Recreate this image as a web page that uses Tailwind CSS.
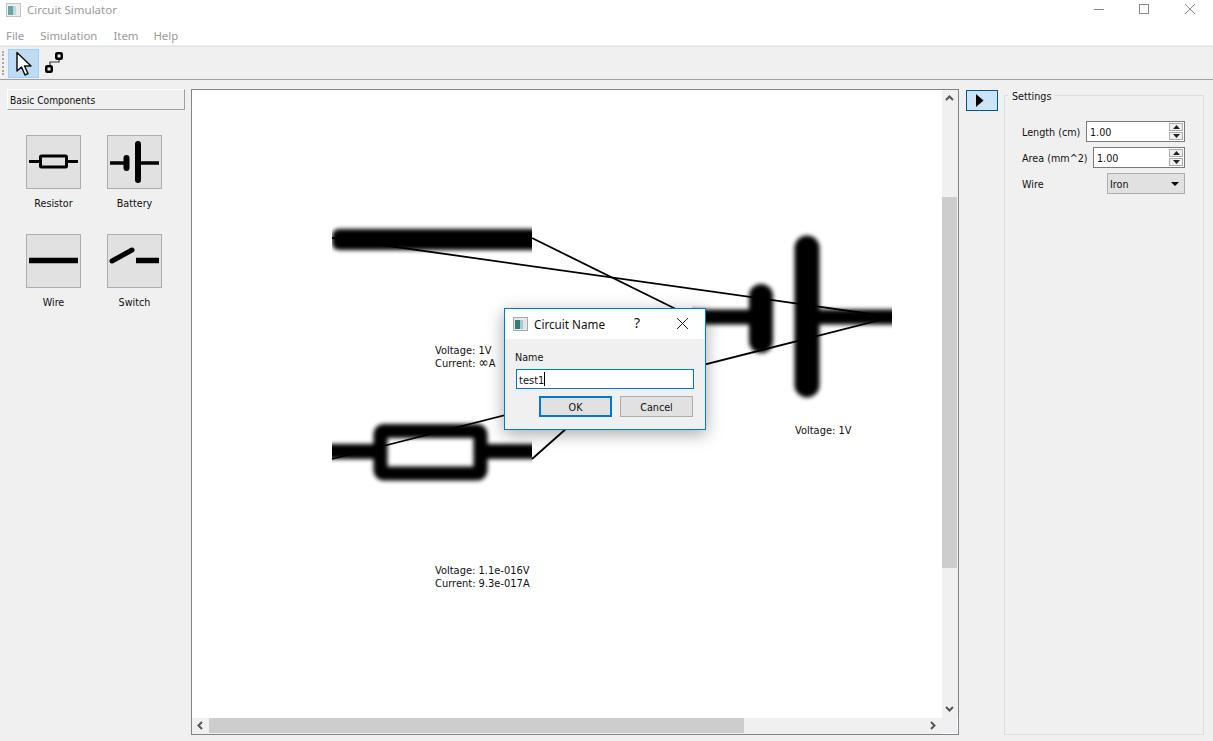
<!DOCTYPE html>
<html lang="en">
<head>
    <meta charset="UTF-8">
    <title>Circuit Simulator</title>
    <script src="https://cdn.jsdelivr.net/npm/@tailwindcss/browser@4"></script>
</head>
<body class="w-[1213px] h-[741px] overflow-hidden bg-[#f0f0f0] text-[10.700px] leading-[13px] text-[#111] font-['DejaVu_Sans_Condensed','Noto_Sans',sans-serif]">
    <!-- Title bar -->
    <div class="h-[25px] bg-white flex items-start relative">
        <svg class="ml-[6px] mt-[3px] opacity-70" width="15" height="14" viewBox="0 0 15 14">
            <rect x="0.5" y="0.5" width="14" height="13" fill="#e8e8e8" stroke="#a9a9a9"/>
            <rect x="2" y="3" width="5" height="9" fill="#2e7d78"/>
            <rect x="7" y="3" width="3" height="9" fill="#a5c9d6"/>
            <rect x="10" y="3" width="3" height="9" fill="#dfe6e6"/>
        </svg>
        <span class="ml-[6px] mt-[2px] text-[11.500px] leading-[16px] text-[#999] font-['Noto_Sans',sans-serif]">Circuit Simulator</span>
        <svg class="absolute left-[1094px] top-[4px]" width="102" height="11" viewBox="0 0 102 11" fill="none" stroke="#8a8a8a">
            <path d="M0 5.5H10"/>
            <rect x="45.5" y="0.5" width="9" height="9"/>
            <path d="M91 0L101 10M101 0L91 10"/>
        </svg>
    </div>
    <!-- Menu -->
    <div class="h-[21px] bg-white flex items-center gap-[16px] pl-[6px] pt-[1px] text-[11.400px] text-[#999] border-b border-[#f0f0f0] font-['Noto_Sans',sans-serif]">
        <span>File</span><span>Simulation</span><span class="w-[24px]">Item</span><span>Help</span>
    </div>
    <!-- Toolbar -->
    <div class="h-[34px] flex items-center border-b border-[#a0a0a0] border-t border-t-[#e3e3e3] relative">
        <div class="ml-[2px] w-[2px] h-[24px] border-l-2 border-dotted border-[#a8a8a8]"></div>
        <div class="ml-[4px] w-[31px] h-[29px] bg-[#bfdcf4] border border-[#99d1ff] flex items-center justify-center">
            <svg width="17" height="25" viewBox="0 0 17 25">
                <path d="M2 1.5V20L6.5 16L10 24L13 22.500L9.500 15H16Z" fill="#fff" stroke="#111" stroke-width="1.500" stroke-linejoin="round"/>
            </svg>
        </div>
        <svg class="ml-[6px]" width="20" height="24" viewBox="0 0 20 24" fill="none" stroke="#000">
            <rect x="1.250" y="15.250" width="5.500" height="5.500" stroke-width="2.500" rx="1"/>
            <rect x="11.250" y="2.250" width="5.500" height="5.500" stroke-width="2.500" rx="1"/>
            <path d="M5 14V11H14V9" stroke-width="1.200" stroke="#333"/>
        </svg>
    </div>
    <!-- Main -->
    <div class="flex h-[655px] items-start">
        <!-- Component palette -->
        <div class="w-[191px] pl-[7px] pt-[9px] shrink-0">
            <div class="w-[178px] h-[21px] pl-[2px] pt-[2px] text-[10.200px] flex items-center bg-[#f0f0f0] border-t border-l border-t-white border-l-white border-r border-b border-r-[#a0a0a0] border-b-[#a0a0a0]">Basic Components</div>
            <div class="grid grid-cols-[55px_55px] gap-x-[26px] gap-y-[24px] ml-[19px] mt-[25px]">
                <div class="flex flex-col items-center gap-[8px]">
                    <div class="w-[55px] h-[54px] bg-[#e1e1e1] border border-[#adadad]">
                        <svg class="blur-[0.4px]" width="53" height="52" viewBox="0 0 53 52" fill="none" stroke="#000">
                            <path d="M2 25.500H13M40 25.500H51" stroke-width="3"/>
                            <rect x="13.500" y="20" width="26" height="11" rx="1" stroke-width="3"/>
                        </svg>
                    </div>
                    <span>Resistor</span>
                </div>
                <div class="flex flex-col items-center gap-[8px]">
                    <div class="w-[55px] h-[54px] bg-[#e1e1e1] border border-[#adadad]">
                        <svg class="blur-[0.4px]" width="53" height="52" viewBox="0 0 53 52" fill="none" stroke="#000" stroke-linecap="round">
                            <path d="M2 27H18" stroke-width="3.500" stroke-linecap="butt"/>
                            <path d="M18.500 22V32" stroke-width="6"/>
                            <path d="M30 8V44" stroke-width="6"/>
                            <path d="M30 27H51" stroke-width="3.500" stroke-linecap="butt"/>
                        </svg>
                    </div>
                    <span>Battery</span>
                </div>
                <div class="flex flex-col items-center gap-[8px]">
                    <div class="w-[55px] h-[54px] bg-[#e1e1e1] border border-[#adadad]">
                        <svg class="blur-[0.4px]" width="53" height="52" viewBox="0 0 53 52" fill="none" stroke="#000">
                            <path d="M2 25.500H51" stroke-width="5.500" stroke-linecap="butt"/>
                        </svg>
                    </div>
                    <span>Wire</span>
                </div>
                <div class="flex flex-col items-center gap-[8px]">
                    <div class="w-[55px] h-[54px] bg-[#e1e1e1] border border-[#adadad]">
                        <svg class="blur-[0.4px]" width="53" height="52" viewBox="0 0 53 52" fill="none" stroke="#000">
                            <path d="M4 26L24 15" stroke-width="5" stroke-linecap="round"/>
                            <path d="M28 25.500H51" stroke-width="5.500"/>
                        </svg>
                    </div>
                    <span>Switch</span>
                </div>
            </div>
        </div>
        <!-- Canvas with scrollbars -->
        <div class="relative w-[768px] h-[646px] mt-[9px] shrink-0 bg-white border border-[#82828c] overflow-hidden">
            <svg class="absolute left-0 top-0" width="750" height="628" viewBox="192 90 750 628">
                <defs>
                    <filter id="soft" filterUnits="userSpaceOnUse" x="192" y="90" width="750" height="628">
                        <feGaussianBlur stdDeviation="2.200"/>
                    </filter>
                    <clipPath id="c1"><rect x="332" y="200" width="200" height="80"/></clipPath>
                    <clipPath id="c2"><rect x="332" y="400" width="200" height="100"/></clipPath>
                    <clipPath id="c3"><rect x="692" y="220" width="200" height="200"/></clipPath>
                </defs>
                <g clip-path="url(#c1)">
                    <rect x="332" y="229" width="230" height="21" rx="7" fill="#000" filter="url(#soft)"/>
                </g>
                <g clip-path="url(#c2)">
                    <g fill="none" stroke="#000" filter="url(#soft)">
                        <path d="M300 451.500H380M481 451.500H560" stroke-width="15"/>
                        <rect x="380.500" y="431" width="100" height="42.500" rx="3" stroke-width="14"/>
                    </g>
                </g>
                <g clip-path="url(#c3)">
                    <g fill="none" stroke="#000" stroke-linecap="round" filter="url(#soft)">
                        <path d="M660 317H760M807 317H920" stroke-width="15" stroke-linecap="butt"/>
                        <path d="M761 296V341" stroke-width="24"/>
                        <path d="M807 248V385" stroke-width="25"/>
                    </g>
                </g>
                <g stroke="#000" stroke-width="1.800" fill="none">
                    <path d="M332 238L892 317"/>
                    <path d="M532 238L692 317"/>
                    <path d="M332 459L892 317"/>
                    <path d="M532 459L692 317"/>
                </g>
            </svg>
            <div class="absolute left-[243px] top-[254px] text-[11px]">Voltage: 1V<br>Current: <span class="text-[13.500px] leading-[0]">∞</span>A</div>
            <div class="absolute left-[603px] top-[334px] text-[11px]">Voltage: 1V</div>
            <div class="absolute left-[243px] top-[474px] text-[11px]">Voltage: 1.1e-016V<br>Current: 9.3e-017A</div>
            <!-- Vertical scrollbar -->
            <div class="absolute right-0 top-0 w-[16px] h-[628px] bg-[#f0f0f0] pr-[1px] flex flex-col items-center">
                <svg class="mt-[5px]" width="9" height="6" viewBox="0 0 9 6" fill="none" stroke="#555" stroke-width="2"><path d="M1 5L4.500 1.500L8 5"/></svg>
                <div class="w-[15px] h-[371px] mt-[96px] bg-[#cdcdcd]"></div>
                <svg class="mt-[138px]" width="9" height="6" viewBox="0 0 9 6" fill="none" stroke="#555" stroke-width="2"><path d="M1 1L4.500 4.500L8 1"/></svg>
            </div>
            <!-- Horizontal scrollbar -->
            <div class="absolute left-0 bottom-[1px] w-[750px] h-[15px] bg-[#f0f0f0] flex items-center">
                <svg class="ml-[5px]" width="6" height="9" viewBox="0 0 6 9" fill="none" stroke="#555" stroke-width="2"><path d="M5 1L1.500 4.500L5 8"/></svg>
                <div class="w-[535px] h-[15px] ml-[6px] bg-[#cdcdcd]"></div>
                <svg class="ml-[186px]" width="6" height="9" viewBox="0 0 6 9" fill="none" stroke="#555" stroke-width="2"><path d="M1 1L4.500 4.500L1 8"/></svg>
            </div>
            <div class="absolute right-0 bottom-0 w-[16px] h-[16px] bg-[#f0f0f0] border-b border-r border-white"></div>
            <div class="absolute left-0 bottom-0 w-[750px] h-px bg-[#f0f0f0]"></div>
        </div>
        <!-- Run button -->
        <div class="ml-[7px] mt-[10px] w-[32px] h-[21px] shrink-0 bg-[#cce4f7] border border-[#005499] flex items-center pl-[9px]">
            <svg width="8" height="13" viewBox="0 0 8 13"><path d="M0 0L7.500 6.500L0 13Z" fill="#000"/></svg>
        </div>
        <!-- Settings -->
        <div class="relative ml-[6px] mt-[15px] w-[200px] h-[640px] border border-[#dcdcdc]">
            <span class="absolute left-[3px] -top-[6px] px-[4px] bg-[#f0f0f0]">Settings</span>
            <div class="flex items-center mt-[25px] ml-[17px]">
                <span class="w-[64px] pt-[2px]">Length (cm)</span>
                <div class="w-[99px] h-[21px] bg-white border border-[#7a7a7a] flex items-center justify-between pl-[3px] pr-[1px]"><span class="pt-[2px]">1.00</span>
                    <div class="flex flex-col gap-[1px]">
                        <div class="w-[14px] h-[8px] bg-[#f0f0f0] border border-[#adadad] flex items-center justify-center"><svg width="7" height="4" viewBox="0 0 7 4"><path d="M3.500 0L7 4H0Z" fill="#222"/></svg></div>
                        <div class="w-[14px] h-[8px] bg-[#f0f0f0] border border-[#adadad] flex items-center justify-center"><svg width="7" height="4" viewBox="0 0 7 4"><path d="M0 0H7L3.500 4Z" fill="#222"/></svg></div>
                    </div>
                </div>
            </div>
            <div class="flex items-center mt-[5px] ml-[17px]">
                <span class="w-[71px] pt-[2px]">Area (mm^2)</span>
                <div class="w-[92px] h-[21px] bg-white border border-[#7a7a7a] flex items-center justify-between pl-[3px] pr-[1px]"><span class="pt-[2px]">1.00</span>
                    <div class="flex flex-col gap-[1px]">
                        <div class="w-[14px] h-[8px] bg-[#f0f0f0] border border-[#adadad] flex items-center justify-center"><svg width="7" height="4" viewBox="0 0 7 4"><path d="M3.500 0L7 4H0Z" fill="#222"/></svg></div>
                        <div class="w-[14px] h-[8px] bg-[#f0f0f0] border border-[#adadad] flex items-center justify-center"><svg width="7" height="4" viewBox="0 0 7 4"><path d="M0 0H7L3.500 4Z" fill="#222"/></svg></div>
                    </div>
                </div>
            </div>
            <div class="flex items-center mt-[5px] ml-[17px]">
                <span class="w-[85px] pt-[2px]">Wire</span>
                <div class="w-[78px] h-[21px] bg-[#e1e1e1] border border-[#adadad] flex items-center justify-between pl-[2px] pr-[5px]"><span class="pt-[2px]">Iron</span>
                    <svg width="8" height="4" viewBox="0 0 8 4"><path d="M0 0H8L4 4Z" fill="#000"/></svg>
                </div>
            </div>
        </div>
    </div>
    <!-- Circuit Name dialog -->
    <div class="absolute left-[504px] top-[308px] w-[202px] h-[122px] bg-[#f0f0f0] border border-[#0078d7] shadow-[0_4px_16px_rgba(0,0,0,0.35)]">
        <div class="h-[30px] bg-white relative flex items-center pl-[8px]">
            <svg width="15" height="14" viewBox="0 0 15 14">
                <rect x="0.500" y="0.500" width="14" height="13" fill="#e8e8e8" stroke="#a9a9a9"/>
                <rect x="2" y="3" width="5" height="9" fill="#2e7d78"/>
                <rect x="7" y="3" width="3" height="9" fill="#a5c9d6"/>
                <rect x="10" y="3" width="3" height="9" fill="#dfe6e6"/>
            </svg>
            <span class="ml-[6px] text-[11.700px] font-['Noto_Sans',sans-serif]">Circuit Name</span>
            <span class="absolute left-[129px] top-[6px] text-[14px] leading-[16px] font-['Noto_Sans',sans-serif]">?</span>
            <svg class="absolute left-[172px] top-[9px]" width="11" height="11" viewBox="0 0 11 11" fill="none" stroke="#222"><path d="M0 0L11 11M11 0L0 11"/></svg>
        </div>
        <div class="pl-[10px] pt-[12px]">Name</div>
        <div class="ml-[11px] mt-[5px] w-[178px] h-[20px] bg-white border border-[#0078d7] pl-[2px] flex items-center text-[11px]"><span class="pt-[2px]">test1</span><span class="w-px h-[14px] bg-black"></span></div>
        <div class="flex ml-[34px] mt-[7px] gap-[8px]">
            <div class="w-[73px] h-[21px] pt-[2px] bg-[#e1e1e1] border-2 border-[#0078d7] flex items-center justify-center">OK</div>
            <div class="w-[73px] h-[21px] pt-[2px] bg-[#e1e1e1] border border-[#adadad] flex items-center justify-center">Cancel</div>
        </div>
    </div>
</body>
</html>
